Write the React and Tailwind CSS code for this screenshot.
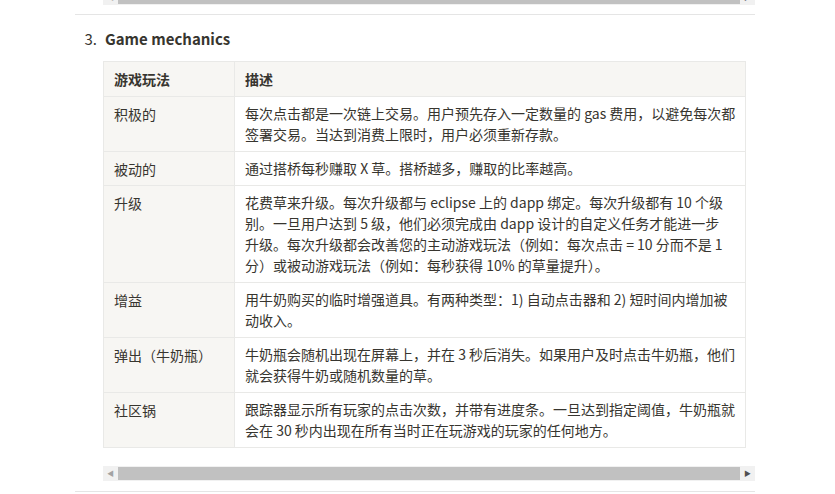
export default function App() {
  const rows = [
    ["积极的", "每次点击都是一次链上交易。用户预先存入一定数量的 gas 费用，以避免每次都签署交易。当达到消费上限时，用户必须重新存款。"],
    ["被动的", "通过搭桥每秒赚取 X 草。搭桥越多，赚取的比率越高。"],
    ["升级", "花费草来升级。每次升级都与 eclipse 上的 dapp 绑定。每次升级都有 10 个级别。一旦用户达到 5 级，他们必须完成由 dapp 设计的自定义任务才能进一步升级。每次升级都会改善您的主动游戏玩法（例如：每次点击 = 10 分而不是 1 分）或被动游戏玩法（例如：每秒获得 10% 的草量提升）。"],
    ["增益", "用牛奶购买的临时增强道具。有两种类型：1) 自动点击器和 2) 短时间内增加被动收入。"],
    ["弹出（牛奶瓶）", "牛奶瓶会随机出现在屏幕上，并在 3 秒后消失。如果用户及时点击牛奶瓶，他们就会获得牛奶或随机数量的草。"],
    ["社区锅", "跟踪器显示所有玩家的点击次数，并带有进度条。一旦达到指定阈值，牛奶瓶就会在 30 秒内出现在所有当时正在玩游戏的玩家的任何地方。"],
  ];
  const Scroll = () => (
    <div className="flex h-[15px] w-[652px] items-center bg-[#f1f1f1]">
      <div className="flex w-[15px] justify-center text-[7px] text-[#a3a3a3]">◀</div>
      <div className="h-[13px] flex-1 bg-[#c1c1c1]" />
      <div className="flex w-[15px] justify-center text-[7px] text-[#505050]">▶</div>
    </div>
  );
  return (
    <div className="h-[494px] w-[835px] overflow-hidden bg-white text-[#37352f]" style={{ fontFamily: '"Segoe UI", "Noto Sans CJK SC", sans-serif' }}>
      <div className="pl-[103px] -mt-[10px]"><Scroll /></div>
      <div className="ml-[75px] mt-[9px] h-px w-[680px] bg-[#e5e5e5]" />
      <div className="mt-[13px] flex text-[15px] font-bold leading-[22px]">
        <span className="w-[105px] pr-[8px] text-right font-normal">3.</span>
        <span>Game mechanics</span>
      </div>
      <div className="ml-[103px] mt-[11px]">
        <table className="w-[643px] border-collapse text-[14px] leading-[20px]">
          <thead>
            <tr className="bg-[#f7f6f3] font-semibold">
              <td className="h-[35px] w-[131px] border border-[#e9e9e7] px-[10px]">游戏玩法</td>
              <td className="border border-[#e9e9e7] px-[10px]">描述</td>
            </tr>
          </thead>
          <tbody>
            {rows.map(([a, b], i) => (
              <tr key={a}>
                <td className="border border-[#e9e9e7] bg-[#f7f6f3] px-[10px] pt-[7px] pb-[6px] align-top">{a}</td>
                <td className={(i === 2 ? "pr-[16px] " : "pr-[6px] ") + "border border-[#e9e9e7] py-[6px] pl-[10px] leading-[21px] align-top"}>{b}</td>
              </tr>
            ))}
          </tbody>
        </table>
      </div>
      <div className="pl-[103px] mt-[18px]"><Scroll /></div>
      <div className="ml-[75px] mt-[10px] h-px w-[680px] bg-[#e5e5e5]" />
    </div>
  );
}
